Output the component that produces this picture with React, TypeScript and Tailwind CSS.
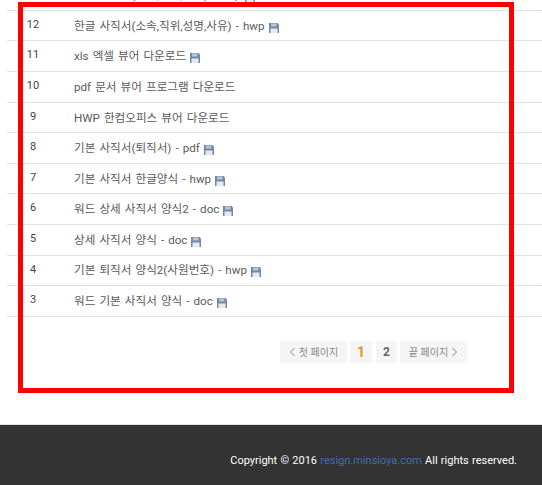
const rows: [string, string, boolean][] = [
  ["13", "기본 사직서(사유,직위,성명) - hwp", true],
  ["12", "한글 사직서(소속,직위,성명,사유) - hwp", true],
  ["11", "xls 엑셀 뷰어 다운로드", true],
  ["10", "pdf 문서 뷰어 프로그램 다운로드", false],
  ["9", "HWP 한컴오피스 뷰어 다운로드", false],
  ["8", "기본 사직서(퇴직서) - pdf", true],
  ["7", "기본 사직서 한글양식 - hwp", true],
  ["6", "워드 상세 사직서 양식2 - doc", true],
  ["5", "상세 사직서 양식 - doc", true],
  ["4", "기본 퇴직서 양식2(사원번호) - hwp", true],
  ["3", "워드 기본 사직서 양식 - doc", true],
];

function Save() {
  return (
    <svg width="10" height="10" viewBox="0 0 10 10" className="ml-[4px] inline-block align-[-3px]">
      <path d="M0 0H8.5L10 1.5V10H0Z" fill="#7388a8" />
      <rect x="2" y="0.5" width="5.5" height="3" fill="#b9c6d8" />
      <rect x="1.5" y="5.5" width="7" height="4.5" fill="#e6ebf2" />
    </svg>
  );
}

function Chev({ d }: { d: string }) {
  return (
    <svg width="7" height="10" viewBox="0 0 7 10" fill="none" stroke="#888" strokeWidth="1">
      <path d={d} />
    </svg>
  );
}

export default function App() {
  return (
    <div className="relative h-[485px] w-[542px] overflow-hidden bg-white font-['Roboto','Noto_Sans_CJK_KR',sans-serif] text-[#555]">
      <div className="-mt-[19.8px] ml-[7px]">
        {rows.map(([n, t, s]) => (
          <div key={n} className="flex h-[30.6px] items-center border-b border-[#e2e2e2]">
            <div className="w-[52px] pb-[1px] text-center text-[11px] text-[#444]">{n}</div>
            <div className="ml-[15px] whitespace-nowrap pt-[2px] text-[11.6px] leading-none text-[#5a5a5a] [word-spacing:1.2px]">
              {t}
              {s && <Save />}
            </div>
          </div>
        ))}
      </div>
      <div className="mt-[24.4px] flex justify-start gap-[3px] pl-[280px] text-[10px] text-[#888]">
        <div className="flex h-[22px] w-[67px] items-center justify-center gap-[3px] rounded-[2px] bg-[#f5f5f5]">
          <Chev d="M5.5 1L1.5 5L5.5 9" /> 첫 페이지
        </div>
        <div className="flex h-[22px] w-[22px] items-center justify-center rounded-[2px] bg-[#f5f5f5] text-[14px] font-bold text-[#dc9a1c]">1</div>
        <div className="ml-[1px] flex h-[22px] w-[21px] items-center justify-center rounded-[2px] bg-[#f5f5f5] text-[12px] font-bold text-[#666]">2</div>
        <div className="flex h-[22px] w-[67px] items-center justify-center gap-[3px] rounded-[2px] bg-[#f5f5f5]">
          끝 페이지 <Chev d="M1.5 1L5.5 5L1.5 9" />
        </div>
      </div>
      <div className="absolute left-[18px] top-[2px] h-[391px] w-[496px] border-[5px] border-[#ff0000]" />
      <div className="absolute bottom-0 left-0 flex h-[61px] w-full items-center justify-end border-t border-[#e5e5e5] bg-[#333] pr-[25px] pt-[12px] text-[11px] text-white [word-spacing:0.5px]">
        <span>
          Copyright © 2016 <span className="text-[#3f6fb5]">resign.minsioya.com</span> All rights reserved.
        </span>
      </div>
    </div>
  );
}
